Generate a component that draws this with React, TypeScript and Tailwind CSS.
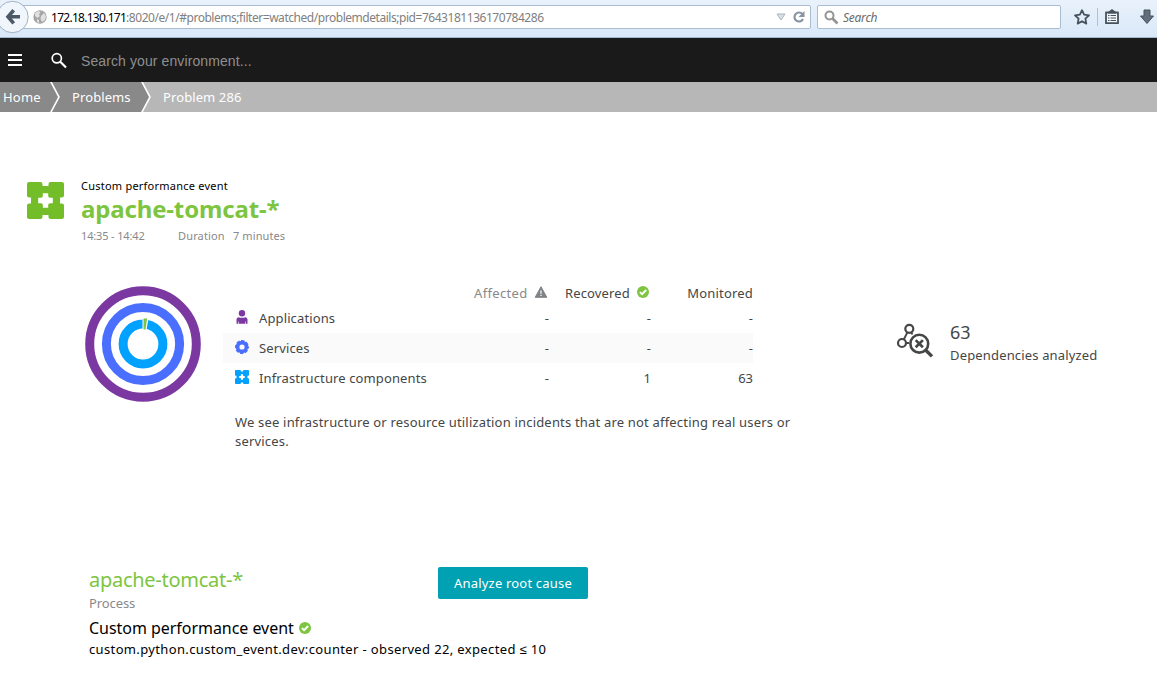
import type { ReactNode } from "react";

const HUB =
  "M2 0H13.500Q15.500 0 15.500 2V4H21.500V2Q21.500 0 23.500 0H35Q37 0 37 2V13.500Q37 15.500 35 15.500H33V21.500H35Q37 21.500 37 23.500V35Q37 37 35 37H23.500Q21.500 37 21.500 35V33H15.500V35Q15.500 37 13.500 37H2Q0 37 0 35V23.500Q0 21.500 2 21.500H4V15.500H2Q0 15.500 0 13.500V2Q0 0 2 0z M15.800 11.200V14Q15.800 15.800 14 15.800H11.200V21.200H14Q15.800 21.200 15.800 23V25.800H21.200V23Q21.200 21.200 23 21.200H25.800V15.800H23Q21.200 15.800 21.200 14V11.200z";

function ComponentIcon({ className }: { className: string }) {
  return (
    <svg viewBox="0 0 37 37" className={className} fill="currentColor" fillRule="evenodd">
      <path d={HUB} />
    </svg>
  );
}

function CheckIcon({ className }: { className: string }) {
  return (
    <svg viewBox="0 0 12 12" className={className}>
      <circle cx="6" cy="6" r="6" fill="#7dc540" />
      <path d="M2.900 6.100 5.100 8.200 9.200 4" fill="none" stroke="#fff" strokeWidth="1.900" />
    </svg>
  );
}

function BrowserBar() {
  return (
    <div className="flex h-[38px] border-b border-[#a3b8cc] bg-linear-to-b from-[#e9f2fb] to-[#d9e8f8]">
      <svg width="32" height="36" viewBox="0 0 32 36" className="relative z-10 shrink-0">
        <circle cx="12.500" cy="17" r="15.700" fill="#f1f6fc" stroke="#a1b2c5" />
        <path d="M13.700 10.200 8 16.800 13.700 23.400M9 16.800H20" fill="none" stroke="#4b5968" strokeWidth="3.600" />
      </svg>
      <div className="-ml-3 mt-[5px] flex h-6 w-[791px] shrink-0 items-center rounded-r-[2px] border border-[#a9bcd0] bg-white pl-3">
        <svg width="14" height="14" viewBox="0 0 14 14" className="shrink-0">
          <circle cx="7" cy="7" r="6.700" fill="#a5a5a5" />
          <path d="M2 3.500 5 1l2.500 1L6 4.500 7 6 4.500 8 2 6zM8 6l3-3 2 3-1 4-3 2-1.500-3zM4 9l2 1v3L4 12z" fill="#e0e0e0" />
        </svg>
        <div className="ml-1 w-[725px] translate-y-px whitespace-nowrap text-[12px] leading-[22px] text-[#808080]">
          <span className="tracking-[-0.72px] text-black">172.18.130.171</span>
          <span className="tracking-[-0.46px]">:8020/e/1/#problems;filter=watched/problemdetails;pid=7643181136170784286</span>
        </div>
        <svg width="10" height="8" viewBox="0 0 10 8" className="shrink-0">
          <path d="M1 1h8L5 7z" fill="#dce1e7" stroke="#abb3bc" />
        </svg>
        <svg width="14" height="14" viewBox="0 0 14 14" className="ml-1.5 shrink-0">
          <path d="M10.500 4.200A4.500 4.500 0 1 0 11 9" fill="none" stroke="#8794a3" strokeWidth="2.200" />
          <path d="M12.500 1v6h-6z" fill="#8794a3" />
        </svg>
      </div>
      <div className="ml-1.5 mt-[5px] flex h-6 w-[244px] shrink-0 items-center rounded-[2px] border border-[#a9bcd0] bg-white pl-1.5">
        <svg width="15" height="15" viewBox="0 0 15 15" className="shrink-0">
          <circle cx="5.500" cy="5.500" r="4" fill="none" stroke="#949494" strokeWidth="2" />
          <path d="m8.500 8.500 5 5" stroke="#949494" strokeWidth="2.600" />
        </svg>
        <span className="ml-1 translate-y-px text-[12px] italic leading-[22px] tracking-[-0.25px] text-[#6a6a6a]">Search</span>
      </div>
      <svg width="18" height="18" viewBox="0 0 18 18" className="ml-3 mt-2 shrink-0">
        <path d="m9 2.200 2.100 4.500 4.900.600-3.600 3.400.900 4.900L9 13.200l-4.300 2.400.900-4.900L2 7.300l4.900-.600z" fill="none" stroke="#46525e" strokeWidth="1.800" strokeLinejoin="round" />
      </svg>
      <div className="ml-1.5 mt-2 h-[18px] w-px shrink-0 bg-[#b2c0d0]" />
      <svg width="16" height="16" viewBox="0 0 16 16" className="ml-1.5 mt-[9px] shrink-0">
        <path d="M2 3.500h12v10.700H2z" fill="#f2f7fc" stroke="#46525e" strokeWidth="1.800" strokeLinejoin="round" />
        <path d="M4 3 8 0l4 3v1.500H4z" fill="#46525e" />
        <path d="M4 6.500h1.500m1 0H12M4 9h1.500m1 0H12M4 11.500h1.500m1 0H12" stroke="#46525e" />
      </svg>
      <svg width="16" height="16" viewBox="0 0 16 16" className="ml-[19px] mt-[9px] shrink-0">
        <path d="M5 1h6v6h3.500L8 14.500 1.500 7H5z" fill="#626e7b" stroke="#46525e" strokeLinejoin="round" />
      </svg>
    </div>
  );
}

function AppHeader() {
  return (
    <div className="flex h-11 items-center bg-[#1a1a1a]">
      <div className="ml-2 flex w-[14px] flex-col gap-[3px]">
        <div className="h-0.5 bg-white" />
        <div className="h-0.5 bg-white" />
        <div className="h-0.5 bg-white" />
      </div>
      <svg width="17" height="17" viewBox="0 0 17 17" className="ml-[29px] shrink-0">
        <circle cx="5.800" cy="6.300" r="4.600" fill="none" stroke="#fff" strokeWidth="1.700" />
        <path d="m9.300 9.800 5.700 5.700" stroke="#fff" strokeWidth="2.200" />
      </svg>
      <span className="ml-[13px] translate-y-px font-['Liberation_Sans',Arial,sans-serif] text-[14px] leading-5 tracking-[0.1px] text-[#8f8f8f]">
        Search your environment...
      </span>
    </div>
  );
}

function Chevron({ last }: { last?: boolean }) {
  return (
    <svg width="12" height="30" viewBox="0 0 12 30" className="shrink-0">
      {last && <path d="M1 0 9 15 1 30H12V0z" fill="#b7b7b7" />}
      <path d="M.5-1 9 15 .5 31" fill="none" stroke="#fff" strokeWidth="1.600" />
    </svg>
  );
}

function Breadcrumbs() {
  return (
    <div className="flex h-[30px] bg-[#b7b7b7] text-[13px] leading-[30px] text-white">
      <div className="flex bg-[#898989]">
        <span className="w-[50px] pl-[3px] tracking-[0.2px]">Home</span>
        <Chevron />
        <span className="w-[79px] pl-2.5 tracking-[0.1px]">Problems</span>
        <Chevron last />
      </div>
      <span className="ml-2.5 tracking-[0.1px]">Problem 286</span>
    </div>
  );
}

function ImpactRings() {
  return (
    <svg width="116" height="116" viewBox="0 0 116 116" fill="none" className="shrink-0">
      <circle cx="58" cy="58" r="53.300" stroke="#7c38a1" strokeWidth="9" />
      <circle cx="58" cy="58" r="36.600" stroke="#4a6fff" strokeWidth="9" />
      <circle cx="58" cy="58" r="19.900" stroke="#00a1ff" strokeWidth="9" />
      <path d="M57.500 44V32h6L61.500 44z" fill="#fff" />
      <path d="M58.500 43.500V32.500h3.600L60.500 43.500z" fill="#7dc540" />
    </svg>
  );
}

type RowProps = {
  icon: ReactNode;
  label: string;
  values: [string, string, string];
  shaded?: boolean;
};

function ImpactRow({ icon, label, values, shaded }: RowProps) {
  return (
    <div className={shaded ? "flex h-[30px] items-center bg-[#fafafa]" : "flex h-[30px] items-center"}>
      <div className="ml-3 flex w-6 shrink-0 -translate-y-px">{icon}</div>
      <span className="w-[190px] tracking-[0.12px]">{label}</span>
      <span className="w-[100px] text-right">{values[0]}</span>
      <span className="w-[102px] text-right">{values[1]}</span>
      <span className="w-[102px] text-right">{values[2]}</span>
    </div>
  );
}

function ImpactTable() {
  return (
    <div className="ml-[22px] w-[530px] shrink-0 whitespace-nowrap text-[13px] leading-[30px] text-[#454646]">
      <div className="flex h-[30px] items-center">
        <span className="ml-[251px] w-[60px] tracking-[0.35px] text-[#898989]">Affected</span>
        <svg width="14" height="12" viewBox="0 0 14 12" className="shrink-0 -translate-y-px">
          <path d="M7 .7 12.800 11.300H1.200z" fill="#7f8488" stroke="#7f8488" strokeLinejoin="round" />
          <path d="M7 4.500v3.200M7 8.800v1.300" stroke="#fff" strokeWidth="1.200" />
        </svg>
        <span className="ml-[17px] w-[72px] tracking-[0.15px]">Recovered</span>
        <CheckIcon className="size-3 shrink-0 -translate-y-px" />
        <span className="ml-auto tracking-[0.2px]">Monitored</span>
      </div>
      <div className="-mt-[5px]">
        <ImpactRow
          label="Applications"
          values={["-", "-", "-"]}
          icon={
            <svg width="14" height="14" viewBox="0 0 14 14" fill="#7c38a1">
              <circle cx="7" cy="3.300" r="3.200" />
              <path d="M3.500 7.200q3.500 1.300 7 0Q12.500 7.700 12.500 9.500V13.800H11V11.500H10.400V13.800H3.600V11.500H3V13.800H1.500V9.500Q1.500 7.700 3.500 7.200z" />
            </svg>
          }
        />
        <ImpactRow
          shaded
          label="Services"
          values={["-", "-", "-"]}
          icon={
            <svg width="14" height="14" viewBox="0 0 14 14" fill="none" stroke="#4a6fff">
              <circle cx="7" cy="7" r="4.400" strokeWidth="3.600" />
              <circle cx="7" cy="7" r="6.200" strokeWidth="1.500" strokeDasharray="3.370 1.500" strokeDashoffset="1.680" />
            </svg>
          }
        />
        <ImpactRow
          label="Infrastructure components"
          values={["-", "1", "63"]}
          icon={<ComponentIcon className="size-[14px] text-[#00a1ff]" />}
        />
      </div>
      <p className="ml-3 mt-5 w-[600px] leading-[19px] tracking-[0.185px]">
        We see infrastructure or resource utilization incidents that are not affecting real users or
        <br />
        services.
      </p>
    </div>
  );
}

function Dependencies() {
  return (
    <div className="ml-[143px] mt-[42px] flex whitespace-nowrap text-[#454646]">
      <svg width="38" height="36" viewBox="0 0 38 36" className="mt-[3px] shrink-0" fill="none" stroke="#454646">
        <circle cx="13.300" cy="5.800" r="4" strokeWidth="2.200" />
        <circle cx="6" cy="20" r="4" strokeWidth="2.200" />
        <path d="M11.300 9.500 7.800 16.500M15.200 9.500l1.300 2M10 20h3" strokeWidth="1.800" />
        <circle cx="23.300" cy="20.700" r="8.900" strokeWidth="2.600" />
        <path d="m29.800 27.200 6.200 6.200" strokeWidth="3.400" />
        <path d="m19.700 17.100 7.200 7.200m0-7.200-7.200 7.200" strokeWidth="2.700" />
      </svg>
      <div className="ml-4">
        <div className="text-[18px] leading-6">63</div>
        <div className="text-[13px] leading-[22px] tracking-[0.16px]">Dependencies analyzed</div>
      </div>
    </div>
  );
}

export default function App() {
  return (
    <div className="h-[673px] w-[1157px] overflow-hidden bg-white font-['Noto_Sans',sans-serif]">
      <BrowserBar />
      <AppHeader />
      <Breadcrumbs />
      <main>
        <div className="flex pl-[27px] pt-[65px]">
          <ComponentIcon className="mt-[5px] size-[37px] text-[#73be28]" />
          <div className="ml-[17px] whitespace-nowrap">
            <div className="text-[11px] leading-[18px] tracking-[0.23px] text-black">Custom performance event</div>
            <h1 className="text-[24px] font-bold leading-7 tracking-[-0.15px] text-[#7dc540]">apache-tomcat-*</h1>
            <div className="flex pt-0.5 text-[11px] leading-[22px] text-[#898989]">
              <span className="w-[97px] tracking-[-0.15px]">14:35 - 14:42</span>
              <span className="w-[55px] tracking-[0.15px]">Duration</span>
              <span className="tracking-[0.1px]">7 minutes</span>
            </div>
          </div>
        </div>
        <div className="flex h-[290px] pl-[85px] pt-[31px]">
          <div className="mt-2 shrink-0">
            <ImpactRings />
          </div>
          <ImpactTable />
          <Dependencies />
        </div>
        <div className="flex whitespace-nowrap pl-[89px] pt-[30px]">
          <div className="w-[349px] shrink-0">
            <h2 className="text-[20px] leading-[26px] tracking-[-0.27px] text-[#7dc540]">apache-tomcat-*</h2>
            <div className="pt-px text-[13px] leading-[18px] tracking-[-0.1px] text-[#898989]">Process</div>
            <div className="mt-0.5 flex items-center text-[16px] leading-7 tracking-[-0.04px] text-black">
              <span className="w-[210px]">Custom performance event</span>
              <CheckIcon className="size-3" />
            </div>
            <div className="-mt-px text-[13px] leading-4 tracking-[0.36px] text-black">
              custom.python.custom_event.dev:counter - observed 22, expected ≤ 10
            </div>
          </div>
          <button className="h-8 w-[150px] rounded-[2px] bg-[#00a1b2] text-[13px] leading-8 tracking-[0.19px] text-white">
            Analyze root cause
          </button>
        </div>
      </main>
    </div>
  );
}
